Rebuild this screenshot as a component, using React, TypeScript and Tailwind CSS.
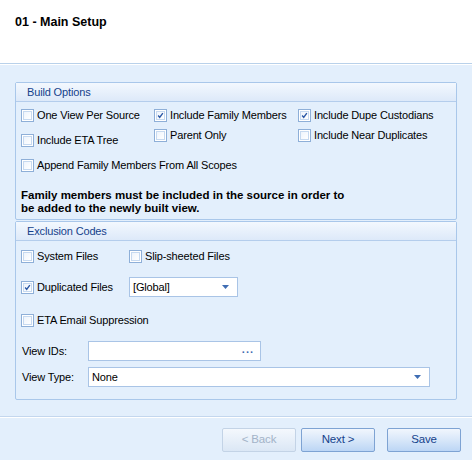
import React from 'react';

const Check: React.FC<{ checked?: boolean; label: string; className?: string }> = ({ checked, label, className = '' }) => (
  <div className={`flex items-center h-[13px] ${className}`}>
    <div className="w-[13px] h-[13px] border border-[#8eafd8] bg-white p-[1px] shrink-0">
      <div className="w-full h-full border border-[#c6d9f0] bg-gradient-to-br from-[#eef4fc] to-white flex items-center justify-center">
        {checked && (
          <svg width="9" height="9" viewBox="0 0 9 9">
            <path d="M1.5 4.5 L3.5 7 L7.5 1.5" fill="none" stroke="#2b58a6" strokeWidth="1.8" />
          </svg>
        )}
      </div>
    </div>
    <span className="ml-[3px] whitespace-nowrap">{label}</span>
  </div>
);

const Arrow = () => (
  <svg width="7" height="4" viewBox="0 0 7 4">
    <path d="M0 0 H7 L3.5 4 Z" fill="#3f6db3" />
  </svg>
);

const GroupHeader: React.FC<{ title: string }> = ({ title }) => (
  <div className="h-[19px] border-b border-[#b4cdec] bg-gradient-to-b from-[#f3f8fe] to-[#dde9f9] pl-[11px] flex items-center text-[#15428b] text-[11px]">
    {title}
  </div>
);

const Button: React.FC<{ label: string; disabled?: boolean; className?: string }> = ({ label, disabled, className = '' }) => (
  <div
    className={`w-[74px] h-[24px] rounded-[2px] border flex items-center justify-center text-[11.5px] ${
      disabled
        ? 'border-[#c3d3e6] bg-gradient-to-b from-[#f4f8fd] to-[#dbe7f5] text-[#a3b3c8]'
        : 'border-[#7ea3d3] bg-gradient-to-b from-[#f1f6fd] via-[#d8e7f9] to-[#bcd6f5] text-[#15428b]'
    } ${className}`}
  >
    {label}
  </div>
);

export default function App() {
  return (
    <div className="w-[472px] h-[460px] flex flex-col font-['Liberation_Sans',Arial,sans-serif] text-[11px] tracking-[-0.15px] text-black">
      <div className="h-[64px] bg-white border-b border-[#b9d1ea] pl-[15px] pt-[13px] shrink-0">
        <div className="font-bold text-[12.5px] tracking-normal">01 - Main Setup</div>
      </div>
      <div className="flex-1 bg-[#e3effc] border-t border-white flex flex-col">
        <div className="mx-[15px] mt-[17px] h-[138px] rounded-[2px] border border-[#a9c7ea] flex flex-col">
          <GroupHeader title="Build Options" />
          <div className="pl-[5px] pt-[7px] flex">
            <div className="w-[133px] flex flex-col gap-[12px]">
              <Check label="One View Per Source" />
              <Check label="Include ETA Tree" />
            </div>
            <div className="w-[144px] flex flex-col gap-[7px]">
              <Check checked label="Include Family Members" />
              <Check label="Parent Only" />
            </div>
            <div className="flex flex-col gap-[7px]">
              <Check checked label="Include Dupe Custodians" />
              <Check label="Include Near Duplicates" />
            </div>
          </div>
          <Check className="ml-[5px] mt-[12px]" label="Append Family Members From All Scopes" />
          <div className="ml-[5px] mt-[17px] font-bold text-[11.5px] tracking-normal leading-[13px]">
            Family members must be included in the source in order to
            <br />
            be added to the newly built view.
          </div>
        </div>
        <div className="mx-[15px] mt-[1px] h-[179px] rounded-[2px] border border-[#a9c7ea] flex flex-col">
          <GroupHeader title="Exclusion Codes" />
          <div className="pl-[5px] pt-[9px] flex">
            <Check className="w-[108px]" label="System Files" />
            <Check label="Slip-sheeted Files" />
          </div>
          <div className="pl-[5px] mt-[14px] flex items-center h-[20px]">
            <Check className="w-[108px]" checked label="Duplicated Files" />
            <div className="w-[109px] h-[20px] bg-white border border-[#a9c4e6] flex items-center pl-[3px] pr-[8px] justify-between">
              <span>[Global]</span>
              <Arrow />
            </div>
          </div>
          <Check className="ml-[5px] mt-[17px]" label="ETA Email Suppression" />
          <div className="ml-[6px] mt-[14px] flex items-center h-[20px]">
            <span className="w-[66px]">View IDs:</span>
            <div className="w-[173px] h-[20px] bg-white border border-[#a9c4e6] flex items-center justify-end pr-[6px]">
              <span className="text-[#3f6db3] font-bold tracking-[1px] leading-none -mt-[4px]">...</span>
            </div>
          </div>
          <div className="ml-[6px] mt-[6px] flex items-center h-[20px]">
            <span className="w-[66px]">View Type:</span>
            <div className="w-[342px] h-[20px] bg-white border border-[#a9c4e6] flex items-center pl-[3px] pr-[8px] justify-between">
              <span>None</span>
              <Arrow />
            </div>
          </div>
        </div>
        <div className="mt-[16px] border-t border-[#c4d7ee] border-b-white h-[1px] border-b" />
        <div className="flex mt-[10px] pl-[222px]">
          <Button disabled label="< Back" />
          <Button className="ml-[5px]" label="Next >" />
          <Button className="ml-[12px]" label="Save" />
        </div>
      </div>
    </div>
  );
}
